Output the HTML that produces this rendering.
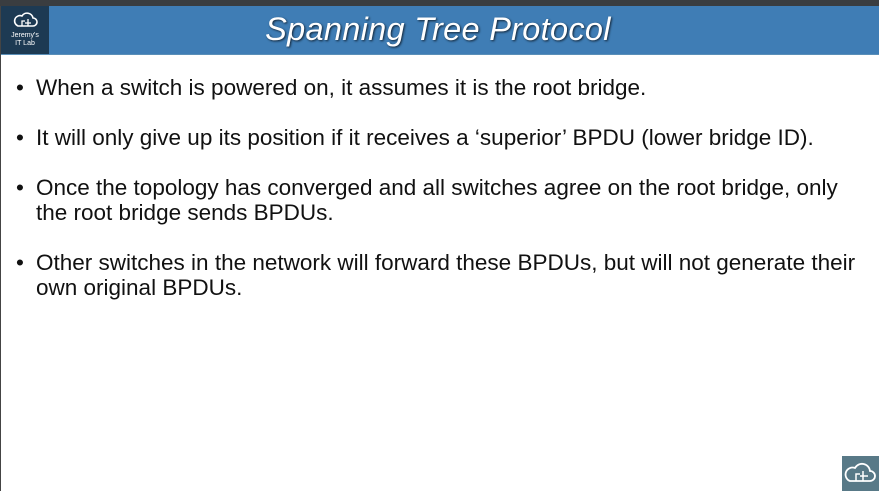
<!DOCTYPE html>
<html><head><meta charset="utf-8"><style>
body{margin:0;width:879px;height:491px;background:#fff;position:relative;overflow:hidden;font-family:"Liberation Sans",sans-serif}
.top{position:absolute;left:0;top:0;width:879px;height:6px;background:#3a3d40}
.hdr{position:absolute;left:0;top:6px;width:879px;height:48px;background:#3f7db5;border-bottom:1px solid #5a8fb8}
.logo{position:absolute;left:1px;top:6px;width:48px;height:48px;background:#1d3a53;color:#fff;text-align:center;font-size:7px;line-height:8px}
.title{position:absolute;left:0;width:876px;top:6px;height:48px;line-height:46px;text-align:center;color:#fff;font-size:32.5px;font-style:italic;font-family:"Liberation Sans",sans-serif;text-shadow:1px 1px 2px #123;letter-spacing:0.3px}
.left{position:absolute;left:0;top:6px;width:1px;height:485px;background:#444}
ul{position:absolute;left:16px;top:75px;margin:0;padding:0;list-style:none;width:850px}
li{position:relative;padding-left:20px;font-size:22.5px;line-height:25px;color:#111;margin-bottom:25px}
li:before{content:"•";position:absolute;left:0;top:0}
.br{position:absolute;left:842px;top:456px;width:37px;height:35px;background:#587987}
</style></head><body>
<div class="top"></div>
<div class="hdr"></div>
<div class="title">Spanning Tree Protocol</div>
<div class="logo">
<svg width="26" height="18" viewBox="0 0 26 18" style="margin-top:5px"><path d="M6 15h15a4 4 0 0 0 0-8a6 6 0 0 0-11-2a4 4 0 0 0-4 10z" fill="none" stroke="#fff" stroke-width="1.6"/><path d="M10 15v-5h3M16 15v-7M13 12h6" stroke="#fff" stroke-width="1.3" fill="none"/></svg>
<div>Jeremy's</div><div>IT Lab</div></div>
<div class="left"></div>
<ul>
<li>When a switch is powered on, it assumes it is the root bridge.</li>
<li>It will only give up its position if it receives a ‘superior’ BPDU (lower bridge ID).</li>
<li>Once the topology has converged and all switches agree on the root bridge, only the root bridge sends BPDUs.</li>
<li>Other switches in the network will forward these BPDUs, but will not generate their own original BPDUs.</li>
</ul>
<div class="br"><svg width="37" height="35" viewBox="0 0 37 35"><path d="M8 25h20a5 5 0 0 0 0-10a8 8 0 0 0-15-3a5 5 0 0 0-5 13z" fill="none" stroke="#fff" stroke-width="1.8"/><path d="M14 25v-7h4M21 25v-10M18 20h8" stroke="#fff" stroke-width="1.5" fill="none"/></svg></div>
</body></html>
